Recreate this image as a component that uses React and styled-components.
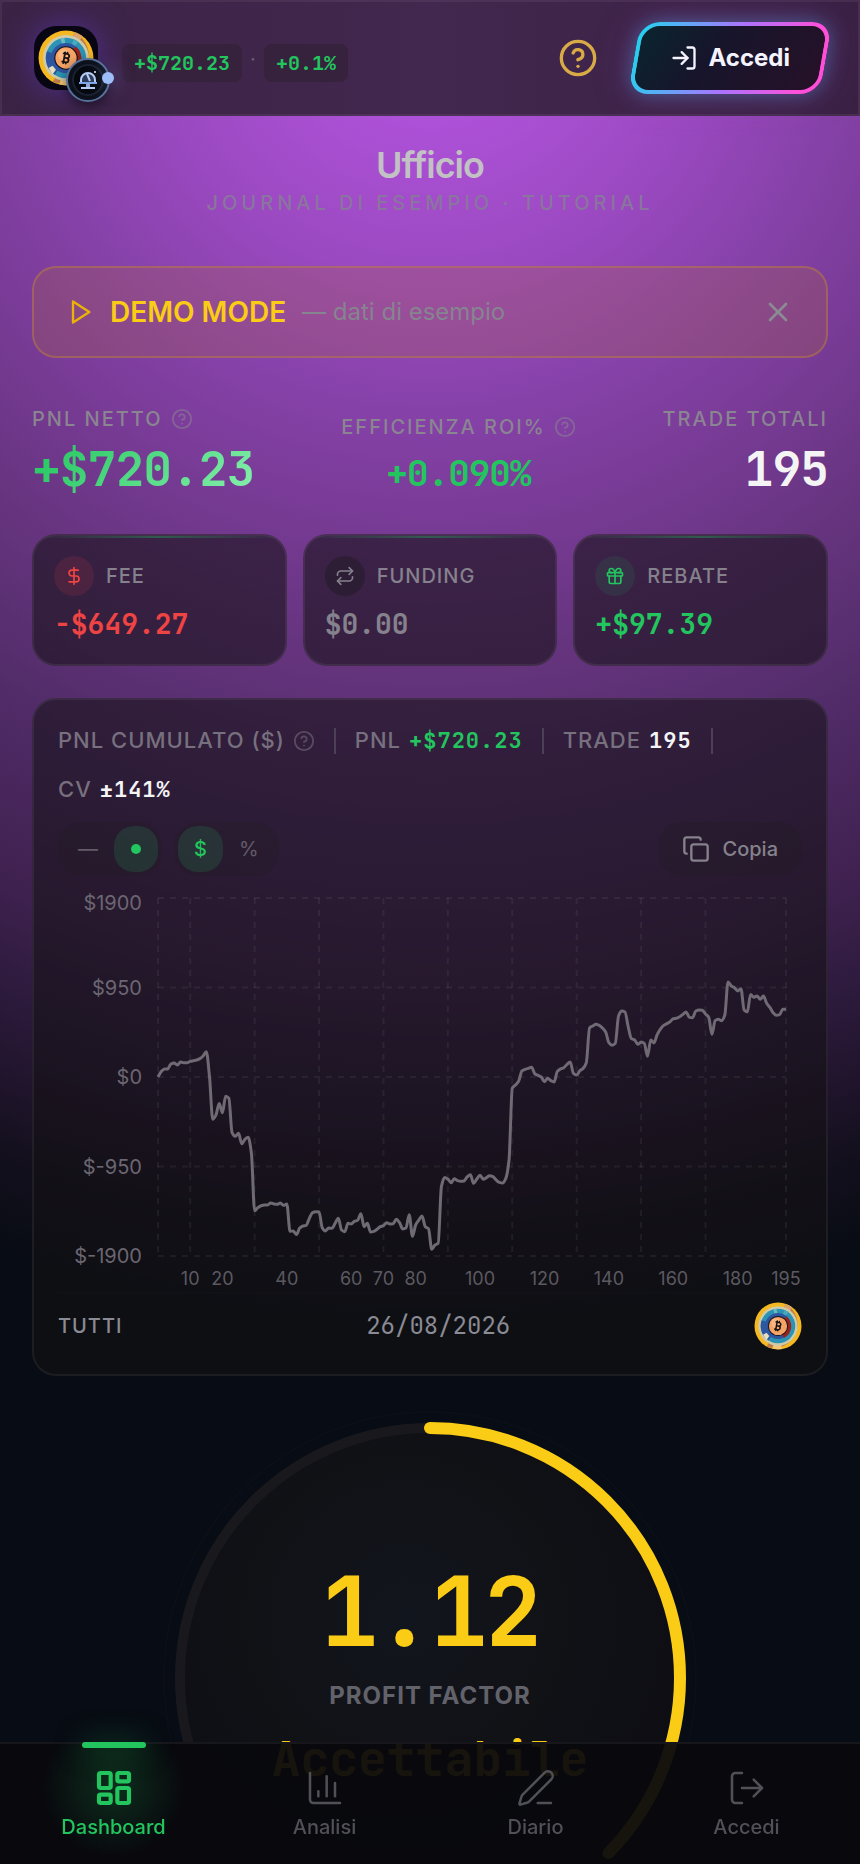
import React, { useState } from 'react';
import styled, { createGlobalStyle, css } from 'styled-components';
import {
  Bitcoin,
  ChartColumn,
  CircleQuestionMark,
  Copy,
  DollarSign,
  Gift,
  LayoutDashboard,
  LogIn,
  LogOut,
  PenLine,
  Repeat,
  X,
} from 'lucide-react';

const TRADES = [
  0, 57, 85, 85, 138, 149, 127, 159, 152, 152, 166, 173, 180, 195, 223, 269, 0, -449, -403, -280,
  -379, -205, -226, -591, -630, -598, -708, -662, -640, -810, -1419, -1387, -1366, -1359, -1359,
  -1337, -1348, -1352, -1337, -1362, -1348, -1638, -1634, -1673, -1603, -1581, -1574, -1500, -1440,
  -1429, -1433, -1599, -1634, -1603, -1606, -1553, -1500, -1624, -1642, -1553, -1560, -1532, -1521,
  -1451, -1589, -1553, -1645, -1638, -1617, -1589, -1578, -1546, -1560, -1557, -1511, -1546, -1613,
  -1603, -1461, -1691, -1571, -1518, -1475, -1589, -1610, -1829, -1783, -1765, -1164, -1068, -1083,
  -1122, -1079, -1100, -1107, -1104, -1061, -1037, -1129, -1083, -1044, -1086, -1068, -1047, -1058,
  -1093, -1118, -1125, -1076, -881, -120, -85, -42, 64, 81, 92, 103, 35, 18, 0, -50, -14, -39, -53,
  60, 85, 99, 134, 159, 39, 21, 67, 92, 152, 520, 541, 559, 548, 520, 478, 364, 336, 357, 647, 700,
  690, 534, 407, 393, 347, 371, 357, 219, 393, 361, 449, 509, 548, 566, 587, 619, 623, 640, 665,
  690, 633, 630, 700, 711, 708, 669, 633, 453, 598, 612, 598, 658, 1008, 966, 948, 913, 938, 711,
  690, 877, 846, 860, 824, 860, 782, 739, 683, 655, 662, 718, 720,
];

const PLOT = { left: 100, right: 728, top: 10, bottom: 368 };
const Y_TICKS = [1900, 950, 0, -950, -1900];
const X_LINES = [0, 10, 30, 50, 70, 90, 110, 130, 150, 170, 195];
const X_TICKS = [10, 20, 40, 60, 70, 80, 100, 120, 140, 160, 180, 195];

const toX = (n) => PLOT.left + (n / 195) * (PLOT.right - PLOT.left);
const toY = (v) => PLOT.top + ((1900 - v) / 3800) * (PLOT.bottom - PLOT.top);

// monotone cubic, so the curve never overshoots a trade
function linePath(values) {
  const pts = values.map((v, i) => [toX(i), toY(v)]);
  const slopes = pts.slice(1).map((p, i) => (p[1] - pts[i][1]) / (p[0] - pts[i][0]));
  const tangents = pts.map((_, i) => {
    if (i === 0) return slopes[0];
    if (i === pts.length - 1) return slopes[i - 1];
    const a = slopes[i - 1];
    const b = slopes[i];
    return a * b <= 0 ? 0 : (2 * a * b) / (a + b);
  });
  let d = `M${pts[0][0]},${pts[0][1]}`;
  for (let i = 1; i < pts.length; i++) {
    const [x0, y0] = pts[i - 1];
    const [x1, y1] = pts[i];
    const h = (x1 - x0) / 3;
    d += `C${x0 + h},${y0 + h * tangents[i - 1]} ${x1 - h},${y1 - h * tangents[i]} ${x1},${y1}`;
  }
  return d;
}

function Coin({ size }) {
  return (
    <svg width={size} height={size} viewBox="0 0 100 100" aria-hidden="true">
      <circle cx="50" cy="50" r="49" fill="#f5b820" />
      <path d="M66 4 A49 49 0 0 1 26 93 L31 85 A40 40 0 0 0 62 12 Z" fill="#c17d45" />
      <path d="M66 4 A49 49 0 0 1 80 11 L75 18 A40 40 0 0 0 62 12 Z" fill="#dca468" />
      <path d="M58 98 A49 49 0 0 1 38 97 L41 88 A40 40 0 0 0 57 89 Z" fill="#f0c878" />
      <circle cx="50" cy="50" r="41" fill="#cfcbaa" />
      <circle cx="50" cy="50" r="36" fill="#2b93b4" />
      <path d="M50 50 L16 38 A36 36 0 0 0 30 80 Z" fill="#2d57a3" />
      <path d="M40 15 L47 14 L50 32 L45 32 Z" fill="#6bbac4" />
      <path d="M64 17 L72 21 L60 36 L56 33 Z" fill="#4aa9bd" />
      <circle cx="50" cy="50" r="27" fill="#2e55a0" />
      <path d="M68 30 A27 27 0 0 1 62 75 L58 65 A18 18 0 0 0 60 36 Z" fill="#9b231c" />
      <path d="M19 68 L26 64 L32 71 L26 79 Z" fill="#e9dfc1" />
      <circle cx="50" cy="50" r="21" fill="#14131c" />
      <circle cx="50" cy="50" r="19" fill="#f5a465" />
      <circle cx="46" cy="44" r="10" fill="#fbbd8c" opacity="0.7" />
      <Bitcoin x="37" y="37" width="26" height="26" color="#17120f" strokeWidth={3} />
    </svg>
  );
}

function Dome() {
  return (
    <svg width="22" height="22" viewBox="0 0 22 22" fill="none" stroke="#b9cef5" aria-hidden="true">
      <path d="M4 13 V11 A7 7 0 0 1 18 11 V13" strokeWidth="2" fill="#2b3a5a" />
      <path d="M10 5 L13 12" strokeWidth="2" />
      <path d="M2 14 H20" strokeWidth="2" stroke="#7fa4e6" />
      <path d="M11 15 V18" strokeWidth="4" stroke="#8ea8d8" />
      <path d="M4 19 H18" strokeWidth="2" />
      <circle cx="18" cy="3" r="1" fill="#e8f0ff" stroke="none" />
    </svg>
  );
}

function PlayIcon() {
  return (
    <svg
      width="28"
      height="28"
      viewBox="0 0 24 24"
      fill="none"
      stroke="currentColor"
      strokeWidth="2"
      strokeLinejoin="round"
      aria-hidden="true"
    >
      <polygon points="6 3 20 12 6 21" />
    </svg>
  );
}

function PnlChart() {
  return (
    <Chart viewBox="0 0 744 404" role="img" aria-label="PNL cumulato">
      <g stroke="rgba(255, 255, 255, 0.06)" strokeWidth="2" strokeDasharray="6 6">
        {Y_TICKS.map((v) => (
          <line key={v} x1={PLOT.left} x2={PLOT.right} y1={toY(v)} y2={toY(v)} />
        ))}
        {X_LINES.map((n) => (
          <line key={n} x1={toX(n)} x2={toX(n)} y1={PLOT.top} y2={PLOT.bottom} />
        ))}
      </g>
      <g fill="#6b6671" fontSize="20" textAnchor="end">
        {Y_TICKS.map((v, i) => (
          <text key={v} x="84" y={toY(v) + (i === 0 ? 12 : 7)}>
            ${v}
          </text>
        ))}
      </g>
      <g fill="#5c5961" fontSize="18" textAnchor="middle">
        {X_TICKS.map((n) => (
          <text key={n} x={toX(n)} y="397">
            {n}
          </text>
        ))}
      </g>
      <path
        d={linePath(TRADES)}
        fill="none"
        stroke="#6f6a73"
        strokeWidth="3"
        strokeLinejoin="round"
      />
    </Chart>
  );
}

function ProfitGauge() {
  const length = 2 * Math.PI * 250;
  return (
    <Gauge>
      <GaugeRing viewBox="0 0 540 540" aria-hidden="true">
        <defs>
          <radialGradient id="dial" cx="0.45" cy="0.38" r="0.6">
            <stop offset="0" stopColor="#11151d" />
            <stop offset="0.5" stopColor="#111216" />
            <stop offset="1" stopColor="#0d0d13" />
          </radialGradient>
        </defs>
        <circle cx="270" cy="270" r="266" fill="#080c14" stroke="#0b0f17" strokeWidth="2" />
        <circle cx="270" cy="270" r="250" fill="url(#dial)" stroke="#19191d" strokeWidth="10" />
        <circle
          cx="270"
          cy="270"
          r="250"
          fill="none"
          stroke="#facc15"
          strokeWidth="12"
          strokeLinecap="round"
          strokeDasharray={`${(length * 1.12) / 3} ${length}`}
          transform="rotate(-90 270 270)"
        />
      </GaugeRing>
      <GaugeText>
        <GaugeValue>1.12</GaugeValue>
        <GaugeLabel>PROFIT FACTOR</GaugeLabel>
        <GaugeVerdict>Accettabile</GaugeVerdict>
      </GaugeText>
    </Gauge>
  );
}

const NAV = [
  { label: 'Dashboard', Icon: LayoutDashboard },
  { label: 'Analisi', Icon: ChartColumn },
  { label: 'Diario', Icon: PenLine },
  { label: 'Accedi', Icon: LogOut },
];

const COSTS = [
  { label: 'FEE', value: '-$649.27', Icon: DollarSign, color: '#ef4444', tint: 'rgba(239, 68, 68, 0.12)' },
  { label: 'FUNDING', value: '$0.00', Icon: Repeat, color: '#85818d', tint: 'rgba(24, 24, 27, 0.4)' },
  { label: 'REBATE', value: '+$97.39', Icon: Gift, color: '#22c55e', tint: 'rgba(34, 197, 94, 0.1)' },
];

function App() {
  const [demo, setDemo] = useState(true);
  const [mark, setMark] = useState('dot');
  const [unit, setUnit] = useState('$');

  return (
    <>
      <GlobalStyle />
      <Shell>
        <Header>
          <HeaderLeft>
            <Avatar>
              <Coin size={56} />
              <AvatarBadge>
                <Dome />
              </AvatarBadge>
              <AvatarDot />
            </Avatar>
            <Pills>
              <Pill>+$720.23</Pill>
              <PillDot>·</PillDot>
              <Pill>+0.1%</Pill>
            </Pills>
          </HeaderLeft>
          <HeaderRight>
            <HelpButton type="button" aria-label="Aiuto">
              <CircleQuestionMark size={40} />
            </HelpButton>
            <LoginButton type="button">
              <LogIn size={28} />
              Accedi
            </LoginButton>
          </HeaderRight>
        </Header>

        <Main>
          <TitleBlock>
            <Title>Ufficio</Title>
            <Subtitle>JOURNAL DI ESEMPIO · TUTORIAL</Subtitle>
          </TitleBlock>

          {demo && (
            <Banner>
              <PlayIcon />
              <BannerTitle>DEMO MODE</BannerTitle>
              <BannerNote>— dati di esempio</BannerNote>
              <CloseButton type="button" aria-label="Chiudi" onClick={() => setDemo(false)}>
                <X size={32} />
              </CloseButton>
            </Banner>
          )}

          <Stats>
            <Stat>
              <StatLabel>
                PNL NETTO <Hint size={22} strokeWidth={2} />
              </StatLabel>
              <StatValue $gradient>+$720.23</StatValue>
            </Stat>
            <Stat $align="center">
              <StatLabel>
                EFFICIENZA ROI% <Hint size={22} strokeWidth={2} />
              </StatLabel>
              <StatValue $small>+0.090%</StatValue>
            </Stat>
            <Stat $align="flex-end">
              <StatLabel>TRADE TOTALI</StatLabel>
              <StatValue>195</StatValue>
            </Stat>
          </Stats>

          <Costs>
            {COSTS.map(({ label, value, Icon, color, tint }) => (
              <CostCard key={label}>
                <CostHead>
                  <CostIcon $color={color} $tint={tint}>
                    <Icon size={20} />
                  </CostIcon>
                  {label}
                </CostHead>
                <CostValue $color={color}>{value}</CostValue>
              </CostCard>
            ))}
          </Costs>

          <Panel>
            <Summary>
              <SummaryItem>
                PNL CUMULATO ($) <Hint size={22} strokeWidth={2} />
              </SummaryItem>
              <Divider />
              <SummaryItem>
                PNL <Figure $green>+$720.23</Figure>
              </SummaryItem>
              <Divider />
              <SummaryItem>
                TRADE <Figure>195</Figure>
              </SummaryItem>
              <Divider />
              <SummaryItem>
                CV <Figure>±141%</Figure>
              </SummaryItem>
            </Summary>

            <Controls>
              <Segment>
                <SegmentButton type="button" $active={mark === 'line'} onClick={() => setMark('line')}>
                  —
                </SegmentButton>
                <SegmentButton
                  type="button"
                  aria-label="Punti"
                  $active={mark === 'dot'}
                  onClick={() => setMark('dot')}
                >
                  <Dot />
                </SegmentButton>
              </Segment>
              <Segment>
                {['$', '%'].map((u) => (
                  <SegmentButton key={u} type="button" $active={unit === u} onClick={() => setUnit(u)}>
                    {u}
                  </SegmentButton>
                ))}
              </Segment>
              <CopyButton type="button">
                <Copy size={28} strokeWidth={2} />
                Copia
              </CopyButton>
            </Controls>

            <PnlChart />

            <PanelFooter>
              <FooterLabel>TUTTI</FooterLabel>
              <FooterDate>26/08/2026</FooterDate>
              <Coin size={48} />
            </PanelFooter>
          </Panel>

          <ProfitGauge />
        </Main>

        <BottomNav>
          {NAV.map(({ label, Icon }, i) => (
            <NavItem key={label} href="#" $active={i === 0}>
              <Icon size={40} strokeWidth={i === 0 ? 2.5 : 1.5} />
              {label}
            </NavItem>
          ))}
        </BottomNav>
      </Shell>
    </>
  );
}

export default App;

const mono = css`
  font-family: 'JetBrains Mono', 'DejaVu Sans Mono', monospace;
`;

const glass = css`
  border: 2px solid rgba(255, 255, 255, 0.06);
  border-radius: 24px;
`;

const GlobalStyle = createGlobalStyle`
  * {
    box-sizing: border-box;
  }

  body {
    margin: 0;
    background: #080c14;
    color: #f4f4f5;
    font-family: Inter, sans-serif;
    font-size: 20px;
    line-height: 30px;
  }

  button {
    font: inherit;
    color: inherit;
    border: 0;
    padding: 0;
    background: none;
    cursor: pointer;
  }
`;

const Shell = styled.div`
  height: 100vh;
  overflow-y: auto;
  scrollbar-width: none;
  background: radial-gradient(
    circle at 50% 0,
    #b857e8 0,
    #ad51d8 120px,
    #9a49c0 280px,
    #8541a7 420px,
    #763a93 540px,
    #63337b 680px,
    #502b67 820px,
    #3f214f 980px,
    #2e1b3e 1070px,
    #20142c 1160px,
    #14101e 1225px,
    #080c14 1320px
  );
`;

const Header = styled.header`
  display: flex;
  align-items: center;
  justify-content: space-between;
  height: 116px;
  padding: 0 32px;
  border: 2px solid rgba(255, 255, 255, 0.06);
  background: linear-gradient(90deg, #3b2345, #42274e 50%, #3a2144);
`;

const HeaderLeft = styled.div`
  display: flex;
  align-items: center;
`;

const Avatar = styled.div`
  position: relative;
  display: flex;
  align-items: center;
  justify-content: center;
  width: 64px;
  height: 64px;
  border-radius: 22px;
  background: #090613;
  box-shadow: 0 0 32px rgba(99, 60, 220, 0.5);
`;

const AvatarBadge = styled.span`
  position: absolute;
  right: -12px;
  bottom: -12px;
  display: flex;
  align-items: center;
  justify-content: center;
  width: 44px;
  height: 44px;
  border: 2px solid #56709b;
  border-radius: 50%;
  background: #05080f;
  box-shadow: inset 0 0 0 4px #0c111b, inset 0 0 0 6px #1a2130, 0 4px 12px rgba(0, 0, 0, 0.5);
`;

const AvatarDot = styled.span`
  position: absolute;
  right: -16px;
  bottom: 6px;
  width: 12px;
  height: 12px;
  border-radius: 50%;
  background: #9dbdfb;
  box-shadow: 0 0 20px rgba(157, 189, 251, 0.6);
`;

const Pills = styled.div`
  display: flex;
  align-items: center;
  margin: 10px 0 0 24px;
`;

const Pill = styled.span`
  ${mono}
  padding: 4px 12px;
  border-radius: 8px;
  background: #36223d;
  color: #22c55e;
  font-weight: 700;
`;

const PillDot = styled.span`
  width: 22px;
  margin-top: -8px;
  text-align: center;
  color: #6b5c74;
`;

const HeaderRight = styled.div`
  display: flex;
  align-items: center;
  gap: 36px;
`;

const HelpButton = styled.button`
  display: flex;
  color: #d9ab47;
`;

const LoginButton = styled.button`
  position: relative;
  z-index: 0;
  display: flex;
  align-items: center;
  gap: 10px;
  height: 72px;
  padding: 0 36px;
  color: #f5f3ff;
  font-size: 24px;
  font-weight: 700;

  &::before {
    content: '';
    position: absolute;
    inset: 0;
    z-index: -1;
    transform: skewX(-10deg);
    border: 4px solid transparent;
    border-radius: 20px;
    background:
      linear-gradient(120deg, #0a242e, #17152b 40%, #261128) padding-box,
      linear-gradient(100deg, #22d3ee, #a875ff 50%, #ff4fd8 90%) border-box;
    box-shadow: 0 0 20px rgba(80, 150, 220, 0.5), 0 0 44px rgba(180, 70, 200, 0.2);
  }
`;

const Main = styled.main`
  padding: 29px 32px 140px;
`;

const TitleBlock = styled.div`
  text-align: center;
`;

const Title = styled.h1`
  margin: 0;
  color: #c2c2c4;
  font-size: 36px;
  line-height: 40px;
  font-weight: 600;
  letter-spacing: -1px;
`;

const Subtitle = styled.p`
  margin: 3px 0 0;
  color: #8a759e;
  font-weight: 500;
  letter-spacing: 4px;
`;

const Banner = styled.section`
  display: flex;
  align-items: center;
  height: 92px;
  margin-top: 48px;
  padding: 0 32px;
  border: 2px solid rgba(190, 130, 60, 0.45);
  border-radius: 24px;
  background: rgba(165, 98, 65, 0.27);
  color: #eab308;
`;

const BannerTitle = styled.strong`
  margin-left: 16px;
  color: #facc15;
  font-size: 28px;
  font-weight: 600;
`;

const BannerNote = styled.span`
  margin-left: 16px;
  color: #86848f;
  font-size: 24px;
`;

const CloseButton = styled.button`
  display: flex;
  margin-left: auto;
  color: #8b8b93;
`;

const Stats = styled.section`
  display: flex;
  align-items: flex-end;
  justify-content: space-between;
  margin-top: 46px;
`;

const Stat = styled.div`
  display: flex;
  flex-direction: column;
  align-items: ${(p) => p.$align || 'flex-start'};
  gap: 11px;
`;

const StatLabel = styled.span`
  display: flex;
  align-items: center;
  gap: 8px;
  color: #8a8591;
  font-weight: 500;
  letter-spacing: 2px;
`;

const Hint = styled(CircleQuestionMark)`
  opacity: 0.55;
`;

const StatValue = styled.span`
  ${mono}
  font-size: ${(p) => (p.$small ? '36px' : '48px')};
  line-height: ${(p) => (p.$small ? '40px' : '48px')};
  font-weight: 700;
  letter-spacing: -1px;
  color: ${(p) => (p.$small ? '#22c55e' : '#f4f4f5')};
  ${(p) =>
    p.$gradient &&
    css`
      background: linear-gradient(135deg, #22c55e, #86efac);
      background-clip: text;
      color: transparent;
    `}
`;

const Costs = styled.section`
  display: grid;
  grid-template-columns: repeat(3, 1fr);
  gap: 16px;
  margin-top: 41px;
`;

const CostCard = styled.article`
  ${glass}
  padding: 20px;
  background:
    linear-gradient(90deg, transparent, rgba(34, 197, 94, 0.35), transparent) top / 100% 2px no-repeat,
    linear-gradient(rgba(26, 20, 28, 0.62), rgba(26, 20, 28, 0.62));
`;

const CostHead = styled.div`
  display: flex;
  align-items: center;
  gap: 12px;
  color: #85818d;
  font-weight: 500;
  letter-spacing: 1px;
`;

const CostIcon = styled.span`
  display: flex;
  align-items: center;
  justify-content: center;
  width: 40px;
  height: 40px;
  border-radius: 50%;
  color: ${(p) => p.$color};
  background: ${(p) => p.$tint};
`;

const CostValue = styled.div`
  ${mono}
  margin-top: 8px;
  color: ${(p) => p.$color};
  font-size: 28px;
  line-height: 40px;
  font-weight: 700;
`;

const Panel = styled.section`
  ${glass}
  margin-top: 32px;
  padding: 24px;
  background: rgba(20, 18, 20, 0.56);
`;

const Summary = styled.div`
  display: flex;
  flex-wrap: wrap;
  align-items: center;
  gap: 16px 19px;
  color: #77707e;
  font-size: 22px;
  font-weight: 500;
  line-height: 33px;
  letter-spacing: 1px;
`;

const SummaryItem = styled.span`
  display: flex;
  align-items: center;
  gap: 8px;
`;

const Divider = styled.i`
  width: 2px;
  height: 26px;
  background: #4d4056;
`;

const Figure = styled.b`
  ${mono}
  color: ${(p) => (p.$green ? '#22c55e' : '#f4f4f5')};
`;

const Controls = styled.div`
  display: flex;
  gap: 12px;
  margin-top: 16px;
`;

const Segment = styled.div`
  display: flex;
  padding: 4px;
  border-radius: 24px;
  background: rgba(32, 28, 30, 0.25);
`;

const SegmentButton = styled.button`
  padding: 8px 16px;
  border-radius: 20px;
  color: #625b68;
  ${(p) =>
    p.$active &&
    css`
      color: #22c55e;
      background: rgba(34, 197, 94, 0.15);
      font-weight: 500;
    `}
`;

const Dot = styled.span`
  display: block;
  width: 10px;
  height: 10px;
  margin: 0 1px;
  border-radius: 50%;
  background: currentColor;
`;

const CopyButton = styled.button`
  display: flex;
  align-items: center;
  gap: 12px;
  margin-left: auto;
  padding: 12px 24px;
  border-radius: 24px;
  background: rgba(32, 28, 30, 0.25);
  color: #85828c;
  font-weight: 500;
`;

const Chart = styled.svg`
  display: block;
  width: 100%;
  margin-top: 12px;
  font-family: Inter, sans-serif;
`;

const PanelFooter = styled.footer`
  display: flex;
  align-items: center;
  justify-content: space-between;
  padding-top: 8px;
  border-top: 2px solid rgba(255, 255, 255, 0.01);
  color: #8b8b95;
`;

const FooterLabel = styled.span`
  font-weight: 500;
  letter-spacing: 1px;
`;

const FooterDate = styled.time`
  ${mono}
  font-size: 24px;
`;

const Gauge = styled.section`
  display: grid;
  justify-items: center;
  margin-top: 32px;

  > * {
    grid-area: 1 / 1;
  }
`;

const GaugeRing = styled.svg`
  width: 540px;
  max-width: 100%;
`;

const GaugeText = styled.div`
  display: flex;
  flex-direction: column;
  align-items: center;
  padding-top: 156px;
`;

const GaugeValue = styled.div`
  ${mono}
  color: #facc15;
  font-size: 96px;
  line-height: 96px;
  font-weight: 700;
  letter-spacing: -3px;
`;

const GaugeLabel = styled.div`
  margin-top: 21px;
  color: #62626b;
  font-size: 24px;
  font-weight: 700;
  letter-spacing: 1px;
`;

const GaugeVerdict = styled.div`
  ${mono}
  margin-top: 20px;
  color: #facc15;
  font-size: 48px;
  line-height: 56px;
  font-weight: 700;
`;

const BottomNav = styled.nav`
  position: fixed;
  left: 0;
  right: 0;
  bottom: 0;
  display: flex;
  height: 122px;
  padding: 0 8px;
  border-top: 2px solid #17171b;
  background: rgba(9, 8, 13, 0.94);
`;

const NavItem = styled.a`
  position: relative;
  display: flex;
  flex: 1;
  flex-direction: column;
  align-items: center;
  gap: 4px;
  padding-top: 24px;
  color: #515057;
  font-weight: 500;
  text-decoration: none;

  ${(p) =>
    p.$active &&
    css`
      color: #22c55e;
      background: radial-gradient(circle at 50% 42px, rgba(34, 197, 94, 0.2), transparent 72px);

      &::before {
        content: '';
        position: absolute;
        top: -2px;
        width: 64px;
        height: 6px;
        border-radius: 3px;
        background: #22c55e;
        box-shadow: 0 0 28px rgba(34, 197, 94, 0.5);
      }
    `}
`;
